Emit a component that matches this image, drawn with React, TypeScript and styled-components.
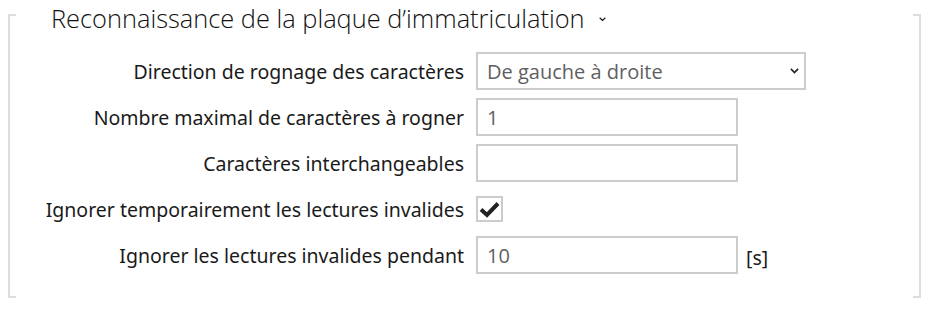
import styled, { createGlobalStyle } from "styled-components";

const GlobalStyle = createGlobalStyle`
  html, body {
    margin: 0;
    padding: 0;
    background: #ffffff;
  }
  body {
    font-family: "Noto Sans", "Open Sans", sans-serif;
    color: #1a1a1a;
  }
`;

const Page = styled.div`
  width: 932px;
  height: 311px;
  padding: 0 11px 0 8px;
  box-sizing: border-box;
`;

const Frame = styled.div`
  display: flex;
  height: 298px;
`;

const Bracket = styled.div<{ side: "left" | "right" }>`
  width: 8px;
  margin-top: 14px;
  box-sizing: border-box;
  border-top: 2px solid #dddddd;
  border-bottom: 2px solid #dddddd;
  ${(p) =>
    p.side === "left"
      ? "border-left: 2px solid #dddddd;"
      : "border-right: 2px solid #dddddd;"}
`;

const Content = styled.div`
  flex: 1;
  display: flex;
  flex-direction: column;
`;

const Title = styled.div`
  display: flex;
  align-items: center;
  gap: 14px;
  height: 36px;
  padding-left: 35px;
  font-family: "Open Sans", sans-serif;
  font-weight: 300;
  font-size: 25.4px;
  color: #111111;
  svg {
    margin-top: 2px;
  }
`;

const Form = styled.div`
  display: grid;
  grid-template-columns: 448px 1fr;
  grid-auto-rows: 38px;
  column-gap: 12px;
  row-gap: 8px;
  margin-top: 16px;
`;

const Label = styled.div`
  display: flex;
  align-items: center;
  justify-content: flex-end;
  font-size: 19.5px;
  color: #1a1a1a;
  white-space: nowrap;
`;

const Control = styled.div`
  display: flex;
  align-items: center;
  gap: 8px;
`;

const Box = styled.div<{ wide?: boolean }>`
  width: ${(p) => (p.wide ? "330px" : "262px")};
  height: 38px;
  box-sizing: border-box;
  border: 2px solid #cccccc;
  display: flex;
  align-items: center;
  justify-content: space-between;
  padding: 0 5px 0 9px;
  font-family: "Open Sans", sans-serif;
  font-size: 20px;
  color: #5f5f5f;
`;

const Check = styled.div`
  width: 27px;
  height: 26px;
  box-sizing: border-box;
  border: 2px solid #cccccc;
  display: flex;
  align-items: center;
  justify-content: center;
`;

const Unit = styled.span`
  font-size: 19.5px;
  color: #1a1a1a;
  margin-top: 4px;
`;

const Chevron = ({ size = 8 }: { size?: number }) => (
  <svg width={size} height={size * 0.6} viewBox="0 0 10 6">
    <path d="M1 1 L5 5 L9 1" fill="none" stroke="#222" strokeWidth="1.8" />
  </svg>
);

export default function App() {
  return (
    <>
      <GlobalStyle />
      <Page>
        <Frame>
          <Bracket side="left" />
          <Content>
            <Title>
              Reconnaissance de la plaque d’immatriculation
              <Chevron size={7} />
            </Title>
            <Form>
              <Label>Direction de rognage des caractères</Label>
              <Control>
                <Box wide>
                  De gauche à droite
                  <Chevron size={9} />
                </Box>
              </Control>

              <Label>Nombre maximal de caractères à rogner</Label>
              <Control>
                <Box>1</Box>
              </Control>

              <Label>Caractères interchangeables</Label>
              <Control>
                <Box />
              </Control>

              <Label>Ignorer temporairement les lectures invalides</Label>
              <Control>
                <Check>
                  <svg width="21" height="17" viewBox="0 0 21 17">
                    <path
                      d="M2 8.5 L8 14 L19 2.5"
                      fill="none"
                      stroke="#222"
                      strokeWidth="4"
                    />
                  </svg>
                </Check>
              </Control>

              <Label>Ignorer les lectures invalides pendant</Label>
              <Control>
                <Box>10</Box>
                <Unit>[s]</Unit>
              </Control>
            </Form>
          </Content>
          <Bracket side="right" />
        </Frame>
      </Page>
    </>
  );
}
